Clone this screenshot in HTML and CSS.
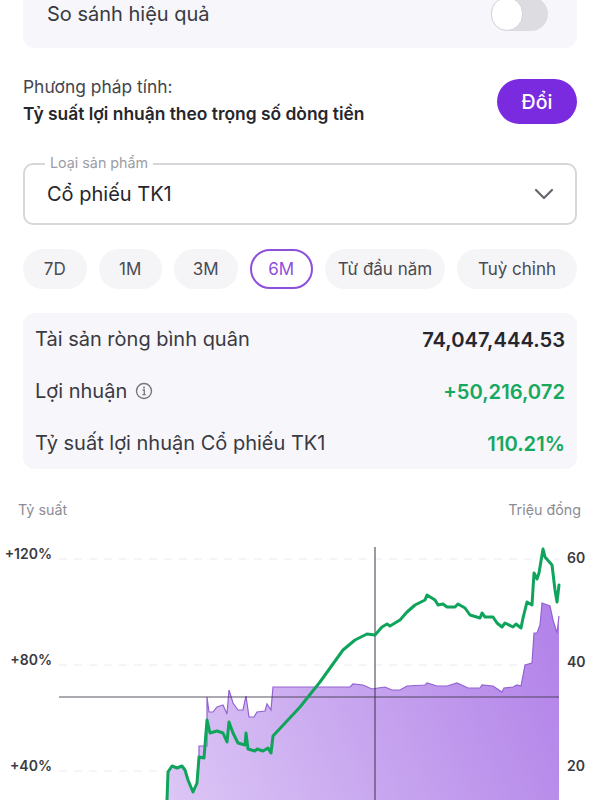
FILE: index.html
```html
<!DOCTYPE html>
<html lang="vi">
<head>
    <meta charset="UTF-8">
    <meta name="viewport" content="width=device-width, initial-scale=1.0">
    <title>Hiệu quả đầu tư</title>
    <link rel="stylesheet" href="styles.css">
</head>
<body>
    <div class="container">
        <div class="compare-card">
            <span>So sánh hiệu quả</span>
            <div class="toggle"><div class="toggle-knob"></div></div>
        </div>

        <div class="method-row">
            <div class="method-text">
                <div>Phương pháp tính:</div>
                <div class="method-name">Tỷ suất lợi nhuận theo trọng số dòng tiền</div>
            </div>
            <button class="change-btn">Đổi</button>
        </div>

        <div class="product-select">
            <span class="product-label">Loại sản phẩm</span>
            <span>Cổ phiếu TK1</span>
            <svg class="chevron" width="20" height="12" viewBox="0 0 20 12">
                <path d="M2 2l8 8 8-8" fill="none" stroke="#66666e" stroke-width="2.2" stroke-linecap="round" stroke-linejoin="round"/>
            </svg>
        </div>

        <div class="chips">
            <div class="chip">7D</div>
            <div class="chip">1M</div>
            <div class="chip">3M</div>
            <div class="chip chip-active">6M</div>
            <div class="chip chip-wide">Từ đầu năm</div>
            <div class="chip chip-wide">Tuỳ chỉnh</div>
        </div>

        <div class="stats-card">
            <div class="stat-row">
                <span>Tài sản ròng bình quân</span>
                <span class="stat-value">74,047,444.53</span>
            </div>
            <div class="stat-row">
                <span class="stat-label">Lợi nhuận
                    <svg width="18" height="18" viewBox="0 0 18 18">
                        <circle cx="9" cy="9" r="7.5" fill="none" stroke="#77777f" stroke-width="1.4"/>
                        <path d="M7.6 8h1.7v4.4M7.4 12.6h3.4" fill="none" stroke="#77777f" stroke-width="1.3"/>
                        <circle cx="9" cy="5.6" r="1" fill="#77777f"/>
                    </svg>
                </span>
                <span class="stat-value stat-green">+50,216,072</span>
            </div>
            <div class="stat-row">
                <span>Tỷ suất lợi nhuận Cổ phiếu TK1</span>
                <span class="stat-value stat-green">110.21%</span>
            </div>
        </div>

        <div class="chart-section">
            <div class="chart-head">
                <span>Tỷ suất</span>
                <span>Triệu đồng</span>
            </div>
            <svg class="chart" width="600" height="270" viewBox="0 530 600 270">
                <defs>
                    <linearGradient id="areaFill" gradientUnits="userSpaceOnUse" x1="170" y1="800" x2="560" y2="640">
                        <stop offset="0" stop-color="#dcc6f5"/>
                        <stop offset="1" stop-color="#b283e9"/>
                    </linearGradient>
                </defs>

                <g class="grid-lines">
                    <line x1="59" y1="559" x2="559" y2="559"/>
                    <line x1="59" y1="665" x2="559" y2="665"/>
                    <line x1="59" y1="771" x2="559" y2="771"/>
                </g>

                <polygon fill="url(#areaFill)" points="167,800 168,772 172,766 177,768 182,766 185,770 188,780 193,792 197,783 199,746 204,746 207,746 207,697 209,712 213,712 217,707 223,705 227,714 229,690 233,703 238,710 243,710 246,696 249,717 254,717 257,712 265,711 267,704 271,710 273,687 350,687 353,684 363,685 372,689 378,688 385,687 392,690 400,690 407,686 425,685 427,683 437,686 447,686 457,683 468,688 480,688 482,685 493,686 502,692 504,688 513,687 517,685 521,686 525,665 532,663 534,633 537,633 540,625 542,603 550,606 553,620 557,633 559,616 559,800"/>
                <polyline class="area-line" points="199,757 199,746 204,746 207,746 207,697 209,712 213,712 217,707 223,705 227,714 229,690 233,703 238,710 243,710 246,696 249,717 254,717 257,712 265,711 267,704 271,710 273,687 350,687 353,684 363,685 372,689 378,688 385,687 392,690 400,690 407,686 425,685 427,683 437,686 447,686 457,683 468,688 480,688 482,685 493,686 502,692 504,688 513,687 517,685 521,686 525,665 532,663 534,633 537,633 540,625 542,603 550,606 553,620 557,633 559,616"/>

                <line class="cross-line" x1="59" y1="697" x2="559" y2="697"/>
                <line class="cross-line" x1="375" y1="547" x2="375" y2="800"/>

                <polyline class="return-line" points="167,800 168,772 172,766 177,768 182,766 185,770 188,780 193,792 197,783 199,757 204,758 207,720 210,733 217,731 223,733 227,742 229,722 233,733 238,743 245,745 246,733 248,749 255,751 257,749 263,751 268,748 271,753 273,736 300,707 320,682 343,650 355,640 367,634 375,635 382,627 387,624 390,626 400,620 407,612 415,605 425,600 427,595 435,600 438,605 443,604 447,607 455,607 458,604 465,608 470,615 480,618 482,613 485,617 493,617 497,623 502,627 505,623 513,627 516,624 521,628 523,618 527,602 532,605 534,573 537,579 539,573 543,549 545,557 552,565 555,590 557,602 559,585"/>

                <g class="axis-left">
                    <text x="52" y="559">+120%</text>
                    <text x="52" y="665">+80%</text>
                    <text x="52" y="771">+40%</text>
                </g>
                <g class="axis-right">
                    <text x="567" y="563">60</text>
                    <text x="567" y="667">40</text>
                    <text x="567" y="771">20</text>
                </g>
            </svg>
        </div>
    </div>
</body>
</html>
```

FILE: styles.css
```css
html,
body {
    height: 800px;
    margin: 0;
    overflow: hidden;
}

body {
    font-family: 'Inter', 'Liberation Sans', sans-serif;
    background-color: white;
    color: #2d2d35;
}

.container {
    display: flex;
    flex-direction: column;
    margin-top: -40px;
    padding: 0 23px;
}

.compare-card {
    display: flex;
    justify-content: space-between;
    align-items: center;
    height: 88px;
    box-sizing: border-box;
    padding: 37px 29px 17px 24px;
    background-color: #f6f6fb;
    border-radius: 12px;
    font-size: 20px;
    color: #3a3a42;
}

.toggle {
    width: 57px;
    height: 34px;
    background-color: #dcdce1;
    border-radius: 17px;
}

.toggle-knob {
    width: 32px;
    height: 34px;
    box-sizing: border-box;
    background-color: white;
    border: 1px solid #d4d4d8;
    border-radius: 17px;
}

.method-row {
    display: flex;
    justify-content: space-between;
    align-items: center;
    height: 45px;
    margin-top: 31px;
    font-size: 17.4px;
    color: #45454d;
}

.method-text {
    margin-top: -3px;
    line-height: 27px;
}

.method-name {
    font-weight: 600;
    color: #26262c;
}

.change-btn {
    width: 80px;
    height: 45px;
    padding: 0;
    background-color: #7a2be0;
    color: white;
    border: none;
    border-radius: 23px;
    font-family: inherit;
    font-size: 19.5px;
    font-weight: 500;
}

.product-select {
    position: relative;
    display: flex;
    justify-content: space-between;
    align-items: center;
    height: 62px;
    box-sizing: border-box;
    margin-top: 39px;
    padding: 0 21px 0 22px;
    border: 2px solid #d8d8dc;
    border-radius: 10px;
    font-size: 20px;
    color: #26262c;
}

.product-label {
    position: absolute;
    top: -11px;
    left: 20px;
    padding: 0 5px;
    background-color: white;
    font-size: 14.3px;
    line-height: 18px;
    color: #9c9ca4;
}

.chips {
    display: flex;
    gap: 12px;
    margin-top: 24px;
}

.chip {
    display: flex;
    justify-content: center;
    align-items: center;
    width: 63.5px;
    height: 40px;
    box-sizing: border-box;
    background-color: #f5f5f8;
    border-radius: 20px;
    font-size: 17px;
    color: #4a4a52;
}

.chip-wide {
    width: 120px;
}

.chip-active {
    background-color: white;
    border: 2px solid #8d4fdc;
    color: #8d4fdc;
}

.stats-card {
    display: flex;
    flex-direction: column;
    margin-top: 24px;
    padding: 0 12px;
    background-color: #f6f6fb;
    border-radius: 12px;
    font-size: 20px;
    color: #3a3a42;
}

.stat-row {
    display: flex;
    justify-content: space-between;
    align-items: center;
    height: 52px;
}

.stat-label {
    display: flex;
    align-items: center;
    gap: 8px;
}

.stat-value {
    font-size: 20.2px;
    font-weight: 600;
    color: #26262c;
}

.stat-green {
    color: #17a860;
}

.chart-section {
    margin: 31px -23px 0;
}

.chart-head {
    display: flex;
    justify-content: space-between;
    height: 20px;
    padding: 0 19px 0 18px;
    font-size: 14.3px;
    line-height: 20px;
    color: #8c8c94;
}

.chart {
    display: block;
    margin-top: 10px;
}

.grid-lines line {
    stroke: #ececf0;
    stroke-width: 1;
    stroke-dasharray: 8 7;
}

.area-line {
    fill: none;
    stroke: #9362d2;
    stroke-width: 1.2;
}

.cross-line {
    stroke: #40364a;
    stroke-opacity: 0.85;
    stroke-width: 1.2;
}

.return-line {
    fill: none;
    stroke: #0fa45b;
    stroke-width: 3;
    stroke-linejoin: round;
    stroke-linecap: round;
}

.axis-left text,
.axis-right text {
    font-size: 14px;
    font-weight: 600;
    fill: #3a3a42;
}

.axis-left text {
    text-anchor: end;
}
```
